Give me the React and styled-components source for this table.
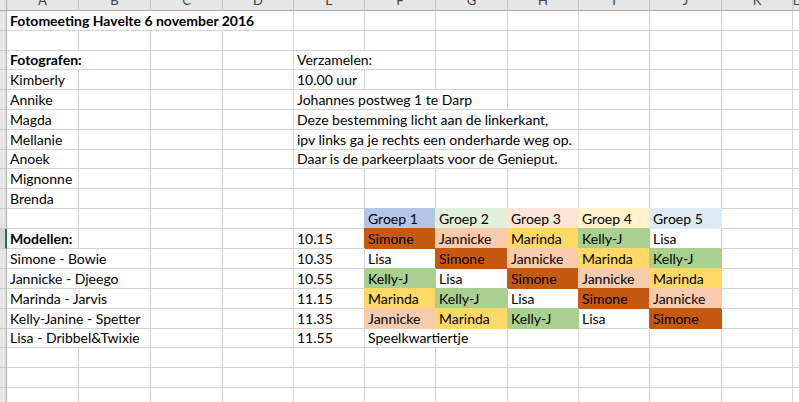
import React from 'react'
import styled, { createGlobalStyle } from 'styled-components'

const GlobalStyle = createGlobalStyle`
    html, body {
        margin: 0;
        padding: 0;
        background: #fff;
        overflow: hidden;
    }
`

const COLS = [72, 72, 72, 71, 71, 71, 72, 71, 71, 72, 71]
const LETTERS = ['A', 'B', 'C', 'D', 'E', 'F', 'G', 'H', 'I', 'J', 'K', 'L']
const ROWS = [20, 20, 19, 20, 20, 20, 20, 19, 20, 20, 20, 20, 20, 20, 20, 20, 19, 20, 20, 20]

const FILLS = {
    g1: '#b4c6e7',
    g2: '#e2efda',
    g3: '#fce4d6',
    g4: '#fff2cc',
    g5: '#ddebf7',
    Simone: '#c65911',
    Jannicke: '#f8cbad',
    Marinda: '#ffd966',
    'Kelly-J': '#a9d08e',
}

const Sheet = styled.div`
    display: grid;
    grid-template-columns: 7px ${COLS.map(w => w + 'px').join(' ')} 1fr;
    grid-template-rows: 11px ${ROWS.map(h => h + 'px').join(' ')};
    width: 800px;
    font-family: Lato, "Liberation Sans", sans-serif;
    font-size: 14px;
    color: #000;
`

const Corner = styled.div`
    background: #e6e6e6;
    border-right: 1px solid #ababab;
    border-bottom: 1px solid #ababab;
    box-sizing: border-box;
`

const ColHead = styled.div`
    background: #e6e6e6;
    border-right: 1px solid #c6c6c6;
    border-bottom: 1px solid #ababab;
    box-sizing: border-box;
    display: flex;
    align-items: flex-end;
    justify-content: center;
    overflow: hidden;
    color: #444;
    font-size: 13px;
    line-height: 13px;
    padding-bottom: 3px;
`

const RowHead = styled.div`
    background: ${p => (p.$active ? '#d2d2d2' : '#e6e6e6')};
    border-right: ${p => (p.$active ? '2px solid #217346' : '1px solid #ababab')};
    border-bottom: 1px solid #c6c6c6;
    box-sizing: border-box;
`

const Cell = styled.div`
    grid-column: span ${p => p.$span || 1};
    box-sizing: border-box;
    border-right: 1px solid ${p => p.$fill || '#d4d4d4'};
    border-bottom: 1px solid ${p => p.$fill || '#d4d4d4'};
    background: ${p => p.$fill || 'transparent'};
    box-shadow: ${p => (p.$fill ? `-1px -1px 0 0 ${p.$fill}` : 'none')};
    display: flex;
    align-items: flex-end;
    padding: 0 0 1px 3px;
    white-space: nowrap;
    line-height: 17px;
    font-weight: ${p => (p.$bold ? 700 : 400)};
`

const c = (t, opts = {}) => ({ t, ...opts })
const blank = n => Array.from({ length: n }, () => c(''))
const names = list => list.map(n => c(n, { fill: FILLS[n] }))

const data = [
    [c('Fotomeeting Havelte 6 november 2016', { bold: true, span: 4 }), ...blank(8)],
    blank(12),
    [c('Fotografen:', { bold: true, span: 2 }), ...blank(2), c('Verzamelen:', { span: 2 }), ...blank(6)],
    [c('Kimberly'), ...blank(3), c('10.00 uur'), ...blank(7)],
    [c('Annike'), ...blank(3), c('Johannes postweg 1 te Darp', { span: 3 }), ...blank(5)],
    [c('Magda'), ...blank(3), c('Deze bestemming licht aan de linkerkant,', { span: 4 }), ...blank(4)],
    [c('Mellanie'), ...blank(3), c('ipv links ga je rechts een onderharde weg op.', { span: 4 }), ...blank(4)],
    [c('Anoek'), ...blank(3), c('Daar is de parkeerplaats voor de Genieput.', { span: 4 }), ...blank(4)],
    [c('Mignonne'), ...blank(11)],
    [c('Brenda'), ...blank(11)],
    [
        ...blank(5),
        c('Groep 1', { fill: FILLS.g1 }),
        c('Groep 2', { fill: FILLS.g2 }),
        c('Groep 3', { fill: FILLS.g3 }),
        c('Groep 4', { fill: FILLS.g4 }),
        c('Groep 5', { fill: FILLS.g5 }),
        ...blank(2),
    ],
    [c('Modellen:', { bold: true }), ...blank(3), c('10.15'), ...names(['Simone', 'Jannicke', 'Marinda', 'Kelly-J', 'Lisa']), ...blank(2)],
    [c('Simone - Bowie', { span: 2 }), ...blank(2), c('10.35'), ...names(['Lisa', 'Simone', 'Jannicke', 'Marinda', 'Kelly-J']), ...blank(2)],
    [c('Jannicke - Djeego', { span: 2 }), ...blank(2), c('10.55'), ...names(['Kelly-J', 'Lisa', 'Simone', 'Jannicke', 'Marinda']), ...blank(2)],
    [c('Marinda - Jarvis', { span: 2 }), ...blank(2), c('11.15'), ...names(['Marinda', 'Kelly-J', 'Lisa', 'Simone', 'Jannicke']), ...blank(2)],
    [c('Kelly-Janine - Spetter', { span: 2 }), ...blank(2), c('11.35'), ...names(['Jannicke', 'Marinda', 'Kelly-J', 'Lisa', 'Simone']), ...blank(2)],
    [c('Lisa - Dribbel&Twixie', { span: 2 }), ...blank(2), c('11.55'), c('Speelkwartiertje', { span: 2 }), ...blank(5)],
    blank(12),
    blank(12),
    blank(12),
]

export default function App() {
    return (
        <>
            <GlobalStyle />
            <Sheet>
                <Corner />
                {LETTERS.map(l => (
                    <ColHead key={l}>{l}</ColHead>
                ))}
                {data.map((row, r) => (
                    <React.Fragment key={r}>
                        <RowHead $active={r === 11} />
                        {row.map((cell, i) => (
                            <Cell key={i} $span={cell.span} $bold={cell.bold} $fill={cell.fill}>
                                {cell.t}
                            </Cell>
                        ))}
                    </React.Fragment>
                ))}
            </Sheet>
        </>
    )
}
